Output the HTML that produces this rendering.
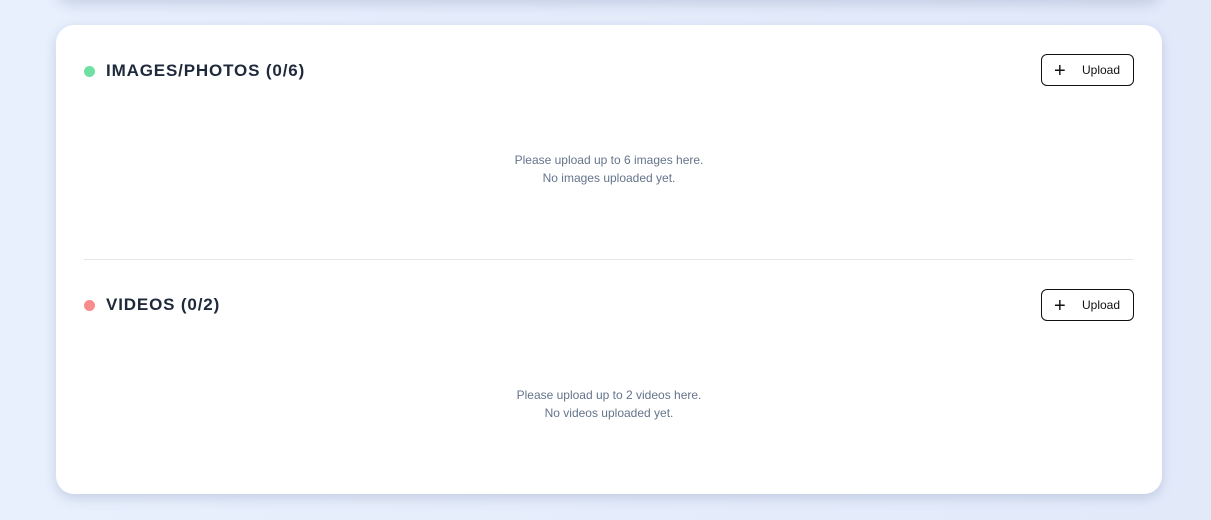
<!DOCTYPE html>
<html><head><style>
body{margin:0;width:1211px;height:520px;overflow:hidden;background:linear-gradient(90deg,#e8f0fd,#e2eafa);font-family:"Liberation Sans",sans-serif;position:relative}
.top{position:absolute;left:56px;top:-44px;width:1106px;height:44px;background:#fff;border-radius:16px;box-shadow:0 4px 14px rgba(60,80,130,.2)}
.card{position:absolute;left:56px;top:25px;width:1106px;height:469px;background:#fff;border-radius:18px;box-shadow:0 4px 12px rgba(60,80,130,.2)}
.h{position:absolute;left:28px;display:flex;align-items:center;font-weight:bold;font-size:17px;color:#1e293b;letter-spacing:.85px}
.dot{width:11px;height:11px;border-radius:50%;margin-right:11px}
.btn{position:absolute;left:985px;width:91px;height:30px;border:1px solid #111;border-radius:6px;font-size:12px;color:#111}
.btn .p{position:absolute;left:12px;top:6px;font-size:20px;font-weight:300;line-height:20px}
.btn .t{position:absolute;left:40px;top:8px}
.msg{position:absolute;left:0;width:1106px;text-align:center;font-size:12px;line-height:18px;color:#64748b}
.hr{position:absolute;left:28px;width:1050px;top:234px;border-top:1px solid #e5e7eb}
</style></head><body>
<div class="top"></div>
<div class="card">
<div class="h" style="top:36px"><span class="dot" style="background:#6ee0a2"></span>IMAGES/PHOTOS (0/6)</div>
<div class="btn" style="top:29px"><span class="p">+</span><span class="t">Upload</span></div>
<div class="msg" style="top:126px">Please upload up to 6 images here.<br>No images uploaded yet.</div>
<div class="hr"></div>
<div class="h" style="top:270px"><span class="dot" style="background:#f98b8b"></span>VIDEOS (0/2)</div>
<div class="btn" style="top:264px"><span class="p">+</span><span class="t">Upload</span></div>
<div class="msg" style="top:361px">Please upload up to 2 videos here.<br>No videos uploaded yet.</div>
</div>
</body></html>
